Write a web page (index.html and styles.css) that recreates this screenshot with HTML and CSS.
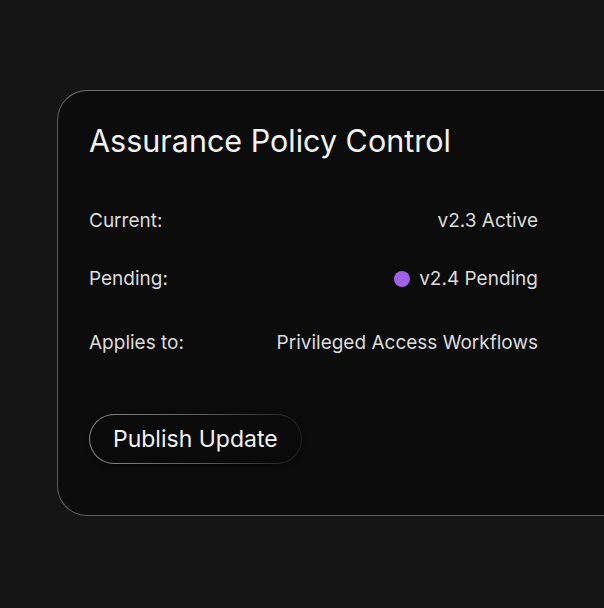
FILE: index.html
```html
<!DOCTYPE html>
<html lang="en">
<head>
  <meta charset="UTF-8" />
  <meta name="viewport" content="width=device-width, initial-scale=1" />
  <title>Assurance Policy Control</title>
  <link rel="stylesheet" href="styles.css">
</head>
<body>

<div class="card">
  <h1 class="card-title">Assurance Policy Control</h1>

  <div class="rows">
    <div class="row">
      <span class="label">Current:</span>
      <span class="value">v2.3 Active</span>
    </div>
    <div class="row">
      <span class="label">Pending:</span>
      <span class="value"><span class="dot"></span>v2.4 Pending</span>
    </div>
    <div class="row row-last">
      <span class="label">Applies to:</span>
      <span class="value">Privileged Access Workflows</span>
    </div>
  </div>

  <button class="btn">Publish Update</button>
</div>

</body>
</html>
```

FILE: styles.css
```css
body {
  font-family: 'Inter', 'Noto Sans', sans-serif;
  margin: 0;
  background: #151515;
  color: #ececec;
  overflow: hidden;
  height: 608px;
}
/* card runs off the right side of the window */
.card {
  margin: 90px 0 0 57px;
  width: calc(100% - 57px);
  height: 426px;
  box-sizing: border-box;
  padding: 30px 0 0 31px;
  background: #0c0c0c;
  border: 1.5px solid #5e5e5e;
  border-top-color: #747474;
  border-right: none;
  border-radius: 30px 0 0 30px;
}
.card-title {
  margin: 0;
  font-size: 30.5px;
  font-weight: 400;
  line-height: 40px;
  color: #f2f2f2;
}
.rows {
  display: flex;
  flex-direction: column;
  gap: 34px;
  width: 449px;
  margin-top: 48px;
}
.row {
  display: flex;
  justify-content: space-between;
  align-items: center;
  font-size: 19px;
  line-height: 24px;
  color: #dcdcdc;
}
.row-last {
  margin-top: 6px;
}
.value {
  display: flex;
  align-items: center;
}
.dot {
  width: 16px;
  height: 16px;
  border-radius: 50%;
  background: #a062e6;
  margin-right: 9px;
}
/* pill with a border that fades out towards the right */
.btn {
  margin-top: 59px;
  height: 50px;
  padding: 0 23px;
  color: #f2f2f2;
  font-family: inherit;
  font-size: 23px;
  border: 1.5px solid transparent;
  background:
    linear-gradient(#0a0a0a, #0a0a0a) padding-box,
    linear-gradient(100deg, #8c8c8c, #5a5a5a 55%, #1e1e1e) border-box;
  border-radius: 25px;
  box-shadow: 0 2px 6px rgba(0,0,0,0.5);
}
```
